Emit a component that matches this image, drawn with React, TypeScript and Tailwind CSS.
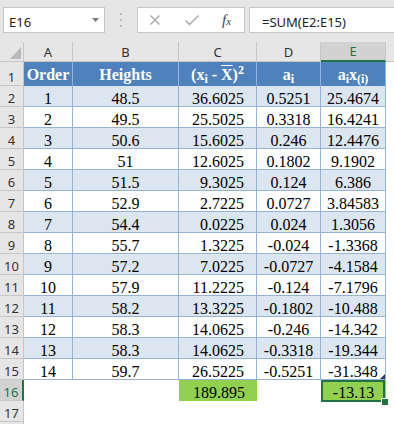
import React from 'react';

const data: string[][] = [
  ['1', '48.5', '36.6025', '0.5251', '25.4674'],
  ['2', '49.5', '25.5025', '0.3318', '16.4241'],
  ['3', '50.6', '15.6025', '0.246', '12.4476'],
  ['4', '51', '12.6025', '0.1802', '9.1902'],
  ['5', '51.5', '9.3025', '0.124', '6.386'],
  ['6', '52.9', '2.7225', '0.0727', '3.84583'],
  ['7', '54.4', '0.0225', '0.024', '1.3056'],
  ['8', '55.7', '1.3225', '-0.024', '-1.3368'],
  ['9', '57.2', '7.0225', '-0.0727', '-4.1584'],
  ['10', '57.9', '11.2225', '-0.124', '-7.1796'],
  ['11', '58.2', '13.3225', '-0.1802', '-10.488'],
  ['12', '58.3', '14.0625', '-0.246', '-14.342'],
  ['13', '58.3', '14.0625', '-0.3318', '-19.344'],
  ['14', '59.7', '26.5225', '-0.5251', '-31.348'],
];

const cols = ['w-[49px]', 'w-[106px]', 'w-[78px]', 'w-[64px]', 'w-[65px]'];
const letters = ['A', 'B', 'C', 'D', 'E'];

export default function App() {
  return (
    <div className="w-[394px] h-[424px] overflow-hidden bg-white font-['Noto_Sans',sans-serif]">
      <FormulaBar />

      {/* Column letters */}
      <div className="flex h-[20px] bg-[#e6e6e6] text-[13px]">
        <div className="w-[24px] shrink-0 border-r border-b border-[#c6c6c6]">
          <svg width="23" height="19">
            <polygon points="10,17 21,17 21,5" fill="#b9b9b9" />
          </svg>
        </div>
        {letters.map((l, j) => (
          <div
            key={l}
            className={`${cols[j]} shrink-0 border-r border-b border-[#c6c6c6] flex items-center justify-center leading-[18px] ${
              l === 'E' ? 'bg-[#d2d2d2] text-[#217346] border-b-2 border-b-[#217346]' : 'text-[#333]'
            }`}
          >
            {l}
          </div>
        ))}
        <div className="flex-1 border-b border-[#c6c6c6]" />
      </div>

      {/* Table header */}
      <div className="flex h-[24px] font-['Liberation_Serif',serif] text-[16px]">
        <RowHead n={1} />
        {[
          <>Order</>,
          <>Heights</>,
          <>(x<sub>i</sub> - <span className="overline">X</span>)<sup>2</sup></>,
          <>a<sub>i</sub></>,
          <>a<sub>i</sub>x<sub>(i)</sub></>,
        ].map((h, j) => (
          <div
            key={j}
            className={`${cols[j]} shrink-0 bg-[#4f81bd] text-white font-bold border-r border-[#95b3d7] flex items-end justify-center leading-[14px] pb-[4px]`}
          >
            <span>{h}</span>
          </div>
        ))}
        <div className="flex-1" />
      </div>

      {data.map((r, i) => (
        <DataRow key={i} r={r} n={i + 2} />
      ))}

      {/* Totals */}
      <div className="flex h-[21px] font-['Liberation_Serif',serif] text-[16px]">
        <RowHead n={16} active />
        <div className="w-[49px] shrink-0" />
        <div className="w-[106px] shrink-0" />
        <div className="w-[78px] shrink-0 bg-[#92d050] flex items-end justify-end pr-[12px] pb-[1px] leading-[14px]">
          189.895
        </div>
        <div className="w-[64px] shrink-0" />
        <div className="w-[65px] shrink-0 relative bg-[#92d050] flex items-end justify-center pb-[1px] leading-[14px]">
          -13.13
          <div className="absolute left-0 top-0 w-[64px] h-[22px] border-2 border-[#217346]" />
          <div className="absolute left-[60px] top-[18px] w-[8px] h-[8px] bg-[#217346] border border-white z-10" />
        </div>
        <div className="flex-1" />
      </div>

      <div className="flex h-[21px]">
        <RowHead n={17} />
        <div className="flex-1" />
      </div>
      <div className="flex h-[2px]">
        <div className="w-[24px] bg-[#e6e6e6] border-r border-[#c6c6c6]" />
      </div>
    </div>
  );
}

function FormulaBar() {
  return (
    <div className="h-[42px] bg-[#e6e6e6] flex items-start pt-[7px] text-[13px] text-[#222]">
      <div className="ml-[3px] w-[102px] h-[26px] shrink-0 bg-white border border-[#c6c6c6] flex items-center justify-between pl-[5px] pr-[5px]">
        <span className="pt-[4px] leading-[18px]">E16</span>
        <svg width="7" height="4">
          <polygon points="0,0 7,0 3.5,4" fill="#7a7a7a" />
        </svg>
      </div>
      <div className="ml-[15px] w-[2px] h-[26px] shrink-0 flex flex-col justify-center gap-[4px]">
        <div className="w-[2px] h-[2px] bg-[#bcbcbc]" />
        <div className="w-[2px] h-[2px] bg-[#bcbcbc]" />
        <div className="w-[2px] h-[2px] bg-[#bcbcbc]" />
      </div>
      <div className="ml-[15px] w-[108px] h-[26px] shrink-0 bg-white border border-[#c6c6c6] flex items-center">
        <svg width="10" height="10" className="ml-[12px]">
          <path d="M0.5 0.5 L9.5 9.5 M9.5 0.5 L0.5 9.5" stroke="#a6a6a6" strokeWidth="1.3" />
        </svg>
        <svg width="14" height="11" className="ml-[25px]">
          <path d="M0.5 5.5 L4.5 9.5 L13.5 0.5" stroke="#a6a6a6" strokeWidth="1.4" fill="none" />
        </svg>
        <span className="ml-[23px] font-['Liberation_Serif',serif] italic text-[15px] text-[#444] leading-[18px]">
          f<span className="text-[11px]">x</span>
        </span>
      </div>
      <div className="ml-[4px] w-[170px] h-[26px] shrink-0 bg-white border border-[#c6c6c6] flex items-center pl-[12px]">
        <span className="pt-[4px] leading-[18px]">=SUM(E2:E15)</span>
      </div>
    </div>
  );
}

function RowHead({ n, active }: { n: number; active?: boolean }) {
  return (
    <div
      className={`w-[24px] shrink-0 h-full flex items-end justify-center leading-[14px] pb-[1px] border-b border-[#c6c6c6] font-['Noto_Sans',sans-serif] text-[13px] ${
        active
          ? 'bg-[#d2d2d2] text-[#217346] border-r-2 border-r-[#217346]'
          : 'bg-[#e6e6e6] text-[#333] border-r'
      }`}
    >
      {n}
    </div>
  );
}

function DataRow({ r, n }: { r: string[]; n: number }) {
  const bg = n % 2 === 0 ? 'bg-[#dce6f1]' : 'bg-white';
  return (
    <div className="flex h-[21px] font-['Liberation_Serif',serif] text-[16px] text-black">
      <RowHead n={n} />
      {r.map((v, j) => (
        <div
          key={j}
          className={`${cols[j]} shrink-0 h-full ${bg} border-r border-b border-[#95b3d7] flex items-end leading-[14px] ${
            j === 2 ? 'justify-end pr-[12px]' : 'justify-center'
          } ${j === 4 && n === 15 ? 'relative' : ''}`}
        >
          {v}
          {j === 4 && n === 15 && (
            <svg width="5" height="5" className="absolute right-0 bottom-0">
              <polygon points="5,0 5,5 0,5" fill="#1f3864" />
            </svg>
          )}
        </div>
      ))}
      <div className="flex-1 bg-white" />
    </div>
  );
}
